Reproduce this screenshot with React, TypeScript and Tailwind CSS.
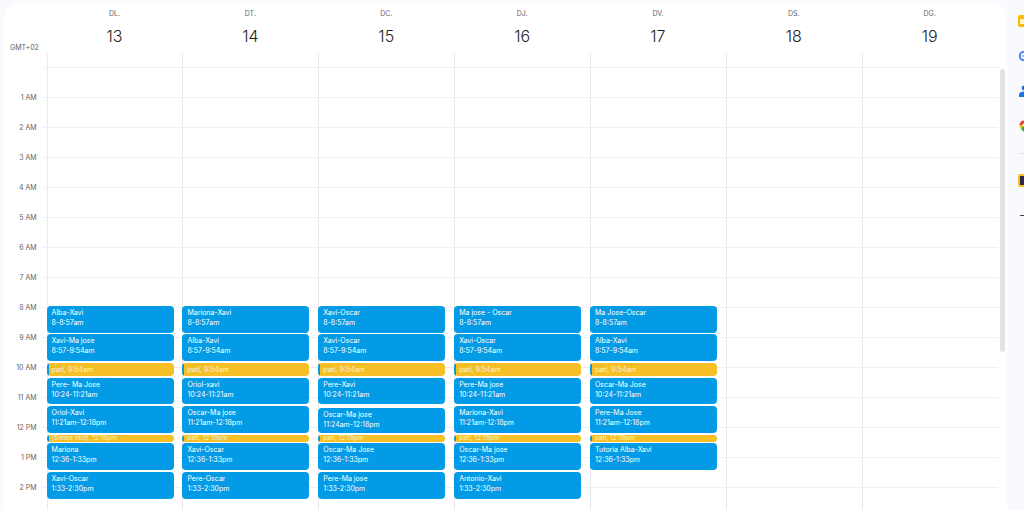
const days = [
  { label: "DL.", num: 13 },
  { label: "DT.", num: 14 },
  { label: "DC.", num: 15 },
  { label: "DJ.", num: 16 },
  { label: "DV.", num: 17 },
  { label: "DS.", num: 18 },
  { label: "DG.", num: 19 },
];

const hours = ["1 AM", "2 AM", "3 AM", "4 AM", "5 AM", "6 AM", "7 AM", "8 AM", "9 AM", "10 AM", "11 AM", "12 PM", "1 PM", "2 PM"];

const times = ["8-8:57am", "8:57-9:54am", "10:24-11:21am", "11:21am-12:18pm", "12:36-1:33pm", "1:33-2:30pm"];

const names = [
  ["Alba-Xavi", "Xavi-Ma jose", "Pere- Ma Jose", "Oriol-Xavi", "Mariona", "Xavi-Oscar"],
  ["Mariona-Xavi", "Alba-Xavi", "Oriol-xavi", "Oscar-Ma jose", "Xavi-Oscar", "Pere-Oscar"],
  ["Xavi-Oscar", "Xavi-Oscar", "Pere-Xavi", "Oscar-Ma jose", "Oscar-Ma Jose", "Pere-Ma jose"],
  ["Ma jose - Oscar", "Xavi-Oscar", "Pere-Ma jose", "Mariona-Xavi", "Oscar-Ma jose", "Antonio-Xavi"],
  ["Ma Jose-Oscar", "Alba-Xavi", "Oscar-Ma Jose", "Pere-Ma Jose", "Tutoria Alba-Xavi"],
];

function Event({ title, time, className }: { title: string; time: string; className: string }) {
  return (
    <div className={`rounded-[4px] bg-[#039be5] pl-[5px] pt-[2px] text-[7px] leading-[9.5px] text-white ${className}`}>
      <div>{title}</div>
      <div>{time}</div>
    </div>
  );
}

function Task({ label, className }: { label: string; className: string }) {
  return (
    <div className={`flex overflow-hidden rounded-[4px] bg-[#f6bf26] text-[#fdf3d2] ${className}`}>
      <span className="mr-[3px] w-[2px] shrink-0 bg-[#039be5]" />
      {label}
    </div>
  );
}

function DayEvents({ day }: { day: number }) {
  const n = names[day];
  return (
    <div className="absolute -left-px top-[252px] flex w-[127px] flex-col">
      <Event title={n[0]} time={times[0]} className="h-[27px]" />
      <Event title={n[1]} time={times[1]} className="mt-[1px] h-[27px]" />
      <Task label="pati, 9:54am" className="mt-[2px] h-[13px] text-[7px] leading-[13px]" />
      <Event title={n[2]} time={times[2]} className="mt-[2px] h-[26px]" />
      {/* dimecres: la reunio comenca 3 minuts mes tard */}
      {day === 2 ? (
        <Event title={n[3]} time="11:24am-12:18pm" className="mt-[4px] h-[25px]" />
      ) : (
        <Event title={n[3]} time={times[3]} className="mt-[2px] h-[27px]" />
      )}
      <Task label={day === 0 ? "(Sense títol), 12:18pm" : "pati, 12:18pm"} className="mt-[2px] h-[7px] text-[6.5px] leading-[7px]" />
      <Event title={n[4]} time={times[4]} className="mt-[1px] h-[27px]" />
      {n[5] && <Event title={n[5]} time={times[5]} className="mt-[2px] h-[27px]" />}
    </div>
  );
}

function SideIcons() {
  return (
    <div className="flex flex-col items-start pl-[11px] pt-[12px]">
      {/* Keep */}
      <div className="flex h-[12px] w-[12px] shrink-0 items-center rounded-[2px] bg-[#fbbc04] pl-[2px]">
        <div className="h-[5px] w-[5px] bg-[#fff3c4]" />
      </div>
      {/* Tasks */}
      <svg viewBox="0 0 12 12" className="mt-[23px] h-[12px] w-[12px] shrink-0">
        <circle cx="6" cy="6" r="4.2" fill="none" stroke="#4285f4" strokeWidth="2" />
        <path d="M4 6h3" stroke="#4285f4" strokeWidth="1.2" />
      </svg>
      {/* Contacts */}
      <svg viewBox="0 0 12 12" className="mt-[23px] h-[12px] w-[12px] shrink-0">
        <circle cx="6" cy="3" r="2.4" fill="#1a73e8" />
        <path d="M1 12V9.5C1 7.5 3.5 6.5 6 6.5S11 7.5 11 9.5V12Z" fill="#1a73e8" />
      </svg>
      {/* Maps */}
      <svg viewBox="0 0 12 12" className="mt-[23px] h-[12px] w-[12px] shrink-0">
        <path d="M1.5 5A4.5 4.5 0 0 1 6 .5V5Z" fill="#ea4335" />
        <path d="M1.5 5H6L3 9Q1.5 7 1.5 5Z" fill="#fbbc04" />
        <path d="M3 9L6 5H10.5Q10.5 7 6 12Z" fill="#34a853" />
        <path d="M6 .5A4.5 4.5 0 0 1 10.5 5H6Z" fill="#e8833a" />
        <circle cx="6" cy="5" r="1.5" fill="#fff" />
      </svg>
      <div className="mt-[21px] h-px w-[8px] shrink-0 bg-[#e3e5e8]" />
      {/* extensio */}
      <div className="mt-[20px] flex h-[13px] w-[13px] shrink-0 items-center rounded-[2px] bg-[#f6c026] pl-[2px]">
        <div className="h-[9px] w-[9px] bg-[#2c2a4a]" />
      </div>
      {/* plus */}
      <div className="ml-[2px] mt-[28px] h-px w-[10px] shrink-0 bg-[#444746]" />
    </div>
  );
}

export default function App() {
  return (
    <div className="flex h-[510px] w-[1024px] overflow-hidden bg-[#f8fafd] pl-[4px] pt-[3px] font-['Inter',sans-serif]">
      <div className="relative h-[507px] w-[1003px] shrink-0 overflow-hidden rounded-t-[16px] bg-white">
        <div className="flex h-[51px]">
          <div className="w-[42.6px] shrink-0" />
          <div className="grid w-[951px] grid-cols-7">
            {days.map((d) => (
              <div key={d.num} className="flex flex-col items-center pt-[7px]">
                <div className="text-[7px] leading-[8px] text-[#5f6368]">{d.label}</div>
                <div className="mt-[6px] text-[16px] font-light leading-[24px] text-[#1f1f1f]">{d.num}</div>
              </div>
            ))}
          </div>
        </div>
        <div className="flex">
          <div className="relative w-[42.6px] shrink-0">
            <div className="absolute left-[6px] top-[-11px] text-[7px] leading-[9px] text-[#5f6368]">GMT+02</div>
            <div className="h-[13px]" />
            <div className="ml-[38px] h-[30px] border-t border-[#eef0f4]" />
            {hours.map((h) => (
              <div key={h} className="relative ml-[38px] h-[30px] border-t border-[#eef0f4]">
                <span className="absolute right-[10px] top-[-5px] whitespace-nowrap text-[7px] leading-[10px] text-[#5f6368]">{h}</span>
              </div>
            ))}
          </div>
          <div className="grid w-[951px] grid-cols-7">
            {days.map((d, i) => (
              <div key={d.num} className="relative border-l border-[#e8eaf0]">
                <div className="h-[13px]" />
                {Array.from({ length: 15 }).map((_, n) => (
                  <div key={n} className="h-[30px] border-t border-[#eef0f4]" />
                ))}
                {i < 5 && <DayEvents day={i} />}
              </div>
            ))}
          </div>
        </div>
        <div className="absolute right-[2px] top-[66px] h-[283px] w-[5px] rounded-[3px] bg-[#e3e3e3]" />
      </div>
      <SideIcons />
    </div>
  );
}
